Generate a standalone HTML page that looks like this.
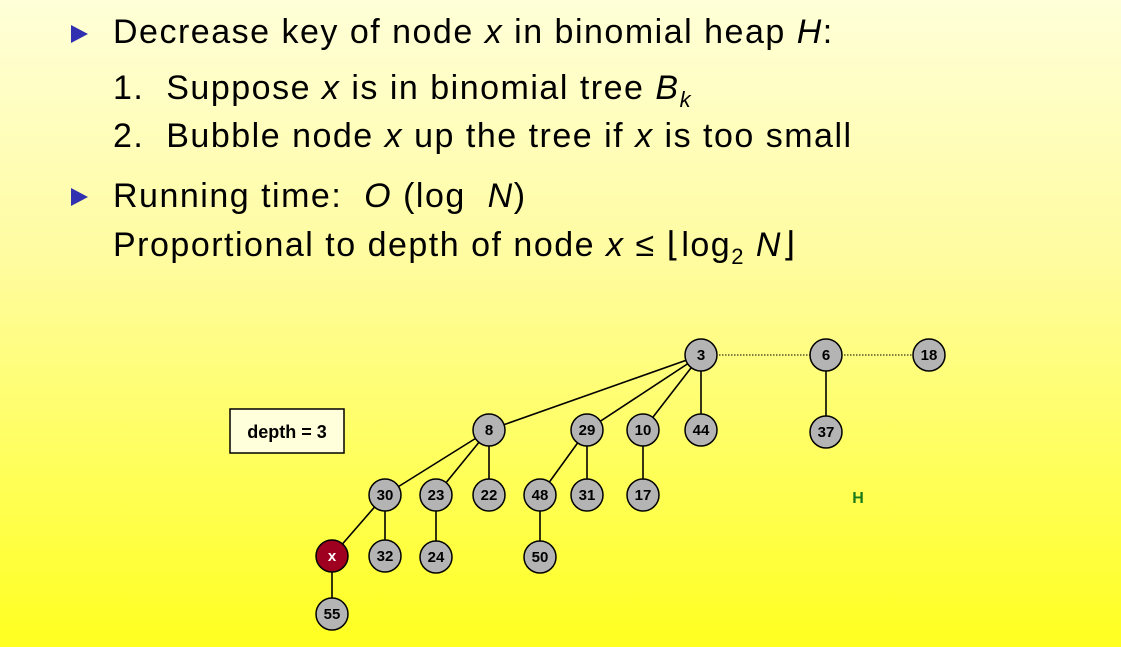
<html><head><style>
body{margin:0;width:1121px;height:647px;overflow:hidden;background:linear-gradient(#ffffd8 0%,#fffca0 40%,#ffff60 70%,#ffff20 100%);font-family:"Liberation Sans",sans-serif;position:relative}
.t{position:absolute;font-size:34px;letter-spacing:1.5px;color:#000;white-space:nowrap}
i{font-style:italic}
.b{position:absolute;width:0;height:0;border-left:17px solid #3030b0;border-top:9px solid transparent;border-bottom:9px solid transparent}
</style></head><body>
<div class="b" style="left:71px;top:25px"></div>
<div class="t" style="left:113px;top:13px">Decrease key of node <i>x</i> in binomial heap <i>H</i>:</div>
<div class="t" style="left:113px;top:69px">1.&nbsp; Suppose <i>x</i> is in binomial tree <i>B<sub style="font-size:22px">k</sub></i></div>
<div class="t" style="left:113px;top:117px">2.&nbsp; Bubble node <i>x</i> up the tree if <i>x</i> is too small</div>
<div class="b" style="left:71px;top:188px"></div>
<div class="t" style="left:113px;top:177px">Running time:&nbsp; <i>O</i> (log&nbsp; <i>N</i>)</div>
<div class="t" style="left:113px;top:225px">Proportional to depth of node <i>x</i> ≤ ⌊log<sub style="font-size:22px">2</sub> <i>N</i>⌋</div>
<svg width="1121" height="647" style="position:absolute;left:0;top:0" font-family="Liberation Sans" font-weight="bold" font-size="15">
<g stroke="#000" stroke-width="1.6">
<line x1="701" y1="355" x2="826" y2="355" stroke-dasharray="1.5 1.5" stroke-width="1"/>
<line x1="826" y1="355" x2="929" y2="355" stroke-dasharray="1.5 1.5" stroke-width="1"/>
<line x1="701" y1="355" x2="489" y2="430"/><line x1="701" y1="355" x2="587" y2="430"/><line x1="701" y1="355" x2="643" y2="430"/><line x1="701" y1="355" x2="701" y2="430"/>
<line x1="826" y1="355" x2="826" y2="432"/>
<line x1="489" y1="430" x2="385" y2="495"/><line x1="489" y1="430" x2="436" y2="495"/><line x1="489" y1="430" x2="489" y2="495"/>
<line x1="587" y1="430" x2="540" y2="495"/><line x1="587" y1="430" x2="587" y2="495"/><line x1="643" y1="430" x2="643" y2="495"/>
<line x1="385" y1="495" x2="332" y2="556"/><line x1="385" y1="495" x2="385" y2="556"/><line x1="436" y1="495" x2="436" y2="557"/><line x1="540" y1="495" x2="540" y2="557"/><line x1="332" y1="556" x2="332" y2="614"/>
</g>
<g stroke="#000" stroke-width="1.5" fill="#b4b4b4">
<circle cx="701" cy="355" r="16"/><circle cx="826" cy="355" r="16"/><circle cx="929" cy="355" r="16"/>
<circle cx="489" cy="430" r="16"/><circle cx="587" cy="430" r="16"/><circle cx="643" cy="430" r="16"/><circle cx="701" cy="430" r="16"/><circle cx="826" cy="432" r="16"/>
<circle cx="385" cy="495" r="16"/><circle cx="436" cy="495" r="16"/><circle cx="489" cy="495" r="16"/><circle cx="540" cy="495" r="16"/><circle cx="587" cy="495" r="16"/><circle cx="643" cy="495" r="16"/>
<circle cx="332" cy="556" r="16" fill="#a00020"/><circle cx="385" cy="556" r="16"/><circle cx="436" cy="557" r="16"/><circle cx="540" cy="557" r="16"/><circle cx="332" cy="614" r="16"/>
</g>
<g text-anchor="middle" fill="#000">
<text x="701" y="360">3</text><text x="826" y="360">6</text><text x="929" y="360">18</text>
<text x="489" y="435">8</text><text x="587" y="435">29</text><text x="643" y="435">10</text><text x="701" y="435">44</text><text x="826" y="437">37</text>
<text x="385" y="500">30</text><text x="436" y="500">23</text><text x="489" y="500">22</text><text x="540" y="500">48</text><text x="587" y="500">31</text><text x="643" y="500">17</text>
<text x="332" y="561" fill="#fff">x</text><text x="385" y="561">32</text><text x="436" y="562">24</text><text x="540" y="562">50</text><text x="332" y="619">55</text>
<text x="858" y="503" fill="#1a7a1a" font-size="16">H</text>
</g>
<rect x="230" y="409" width="114" height="44" fill="#ffffdc" stroke="#000" stroke-width="1.5"/>
<text x="287" y="438" text-anchor="middle" font-size="18">depth = 3</text>
</svg>
</body></html>
